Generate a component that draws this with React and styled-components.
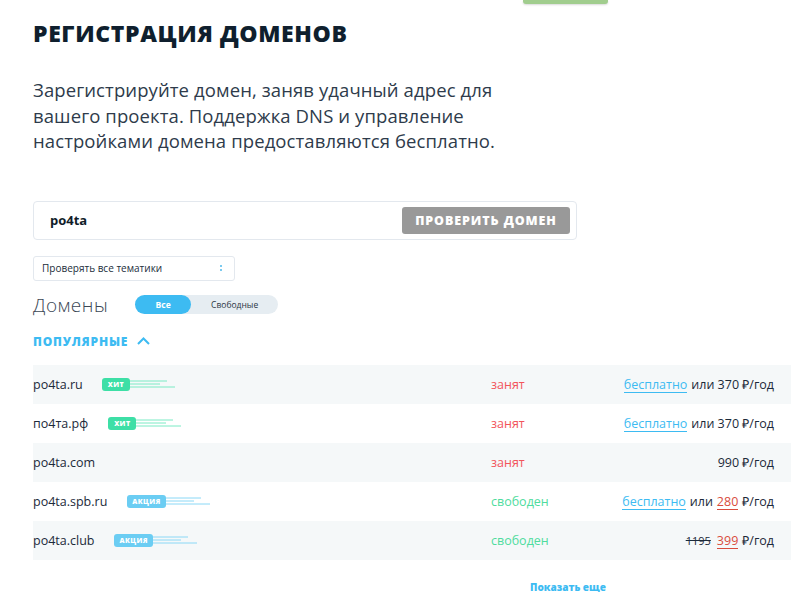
import React from 'react';
import styled, { createGlobalStyle } from 'styled-components';

const GlobalStyle = createGlobalStyle`
  body {
    margin: 0;
    background: #fff;
    font-family: "Open Sans", "Liberation Sans", sans-serif;
    color: #1c2a3a;
  }
`;

const Page = styled.div`
  width: 791px;
  height: 592px;
  overflow: hidden;
`;

const TopStrip = styled.div`
  height: 4px;
  padding-left: 523px;
  display: flex;
  align-items: flex-end;
`;

const TopButton = styled.div`
  width: 85px;
  height: 4px;
  background: #a1cd8e;
  border-radius: 0 0 3px 3px;
  box-shadow: 0 1px 2px rgba(0, 0, 0, 0.15);
`;

const Content = styled.div`
  padding: 0 0 0 33px;
`;

const Title = styled.h1`
  margin: 14px 0 0;
  font-size: 23px;
  line-height: 30px;
  font-weight: 800;
  letter-spacing: 0.6px;
  color: #0f1f2e;
`;

const Lead = styled.p`
  margin: 29px 0 0;
  width: 480px;
  font-size: 18.5px;
  line-height: 25.5px;
  font-weight: 400;
  letter-spacing: 0.1px;
  color: #2e3b4b;
`;

const SearchBox = styled.div`
  margin-top: 47px;
  height: 37px;
  width: 520px;
  border: 1px solid #e3e8ee;
  border-radius: 4px;
  display: flex;
  align-items: center;
  justify-content: space-between;
  padding: 0 6px 0 16px;
`;

const Query = styled.span`
  font-size: 13px;
  font-weight: 700;
  color: #101c28;
`;

const CheckButton = styled.button`
  height: 27px;
  width: 168px;
  border: 0;
  border-radius: 3px;
  background: #999999;
  color: #fff;
  font-family: "Open Sans", "Liberation Sans", sans-serif;
  font-size: 12.5px;
  font-weight: 800;
  letter-spacing: 0.9px;
  padding: 0;
`;

const Select = styled.div`
  margin-top: 16px;
  width: 180px;
  height: 23px;
  border: 1px solid #e3e8ee;
  border-radius: 3px;
  display: flex;
  align-items: center;
  justify-content: space-between;
  padding: 0 12px 0 8px;
  font-size: 10px;
  color: #222d3a;
`;

const Arrows = styled.span`
  display: flex;
  flex-direction: column;
  gap: 2px;
  & i {
    width: 2px;
    height: 2px;
    background: #4fb9ea;
    border-radius: 1px;
  }
`;

const FilterRow = styled.div`
  margin-top: 11px;
  display: flex;
  align-items: center;
  gap: 27px;
`;

const SectionTitle = styled.span`
  font-size: 19px;
  font-weight: 300;
  color: #3b4755;
  letter-spacing: 0.5px;
`;

const Toggle = styled.div`
  width: 143px;
  height: 19px;
  border-radius: 10px;
  background: #e6edf2;
  display: flex;
  align-items: center;
`;

const ToggleItem = styled.span`
  height: 19px;
  border-radius: 10px;
  display: flex;
  align-items: center;
  justify-content: center;
  font-size: 8.5px;
  font-weight: ${p => (p.$active ? 700 : 500)};
  color: ${p => (p.$active ? '#fff' : '#2b3644')};
  background: ${p => (p.$active ? '#3dbbf2' : 'transparent')};
  width: ${p => (p.$active ? '56px' : '87px')};
`;

const Group = styled.div`
  margin-top: 15px;
  display: flex;
  align-items: center;
  gap: 9px;
  font-size: 12px;
  font-weight: 800;
  color: #3dbbf2;
  letter-spacing: 0.8px;
`;

const Table = styled.div`
  margin-top: 15px;
`;

const Row = styled.div`
  height: 39px;
  display: grid;
  grid-template-columns: 458px 1fr auto;
  align-items: center;
  padding-right: 17px;
  background: ${p => (p.$shade ? '#f5f8f9' : '#fff')};
  font-size: 12.5px;
`;

const Domain = styled.div`
  display: flex;
  align-items: center;
  color: #1c2a3a;
`;

const Badge = styled.span`
  margin-left: ${p => p.$gap}px;
  display: flex;
  align-items: center;
`;

const Label = styled.span`
  height: 13px;
  padding: 0 ${p => (p.$kind === 'hit' ? 6 : 5)}px;
  border-radius: 3px;
  background: ${p => (p.$kind === 'hit' ? '#3ddfa6' : '#6bcdf3')};
  color: #fff;
  font-size: 7px;
  font-weight: 800;
  letter-spacing: 0.4px;
  display: flex;
  align-items: center;
`;

const Status = styled.span`
  color: ${p => (p.$free ? '#4fdc9e' : '#f2545b')};
`;

const Price = styled.span`
  display: flex;
  align-items: baseline;
  gap: 4px;
  color: #1c2a3a;
`;

const Free = styled.span`
  color: #3dbbf2;
  border-bottom: 1.5px solid #3dbbf2;
  line-height: 15px;
`;

const Sale = styled.span`
  color: #d94c3d;
  border-bottom: 1.5px solid #d94c3d;
  line-height: 15px;
`;

const Old = styled.s`
  font-size: 11px;
  margin-right: 2px;
`;

const More = styled.div`
  margin-top: 20px;
  padding-left: 497px;
  font-size: 10px;
  font-weight: 800;
  color: #3dbbf2;
`;

const Streak = ({ color, hit }) => (
  <svg width={hit ? 45 : 44} height="10" viewBox={hit ? '0 0 45 10' : '0 0 44 10'}>
    <line x1="0" y1="2" x2={hit ? 37 : 35} y2="2" stroke={color} strokeWidth="1" />
    <line x1="0" y1="5" x2={hit ? 30 : 28} y2="5" stroke={color} strokeWidth="1" />
    <line x1="0" y1="8" x2={hit ? 45 : 44} y2="8" stroke={color} strokeWidth="1" />
  </svg>
);

const Tag = ({ kind, gap }) => (
  <Badge $gap={gap}>
    <Label $kind={kind}>{kind === 'hit' ? 'ХИТ' : 'АКЦИЯ'}</Label>
    <Streak hit={kind === 'hit'} color={kind === 'hit' ? '#7aeac4' : '#8ad8f6'} />
  </Badge>
);

const Chevron = () => (
  <svg width="13" height="8" viewBox="0 0 13 8">
    <path d="M1 7 L6.5 1.5 L12 7" fill="none" stroke="#3dbbf2" strokeWidth="2" />
  </svg>
);

const domains = [
  { name: 'po4ta.ru', tag: 'hit', gap: 19, free: false, price: 'free370' },
  { name: 'по4та.рф', tag: 'hit', gap: 20, free: false, price: 'free370' },
  { name: 'po4ta.com', free: false, price: '990' },
  { name: 'po4ta.spb.ru', tag: 'sale', gap: 20, free: true, price: 'free280' },
  { name: 'po4ta.club', tag: 'sale', gap: 20, free: true, price: 'old' },
];

const renderPrice = kind => {
  if (kind === 'free370') return (<><Free>бесплатно</Free> или 370 ₽/год</>);
  if (kind === 'free280') return (<><Free>бесплатно</Free> или <Sale>280</Sale> ₽/год</>);
  if (kind === 'old') return (<><Old>1195</Old><Sale>399</Sale> ₽/год</>);
  return '990 ₽/год';
};

const App = () => (
  <Page>
    <GlobalStyle />
    <TopStrip>
      <TopButton />
    </TopStrip>
    <Content>
      <Title>РЕГИСТРАЦИЯ ДОМЕНОВ</Title>
      <Lead>
        Зарегистрируйте домен, заняв удачный адрес для вашего проекта. Поддержка DNS и управление
        настройками домена предоставляются бесплатно.
      </Lead>
      <SearchBox>
        <Query>po4ta</Query>
        <CheckButton>ПРОВЕРИТЬ ДОМЕН</CheckButton>
      </SearchBox>
      <Select>
        Проверять все тематики
        <Arrows><i /><i /></Arrows>
      </Select>
      <FilterRow>
        <SectionTitle>Домены</SectionTitle>
        <Toggle>
          <ToggleItem $active>Все</ToggleItem>
          <ToggleItem>Свободные</ToggleItem>
        </Toggle>
      </FilterRow>
      <Group>
        ПОПУЛЯРНЫЕ <Chevron />
      </Group>
      <Table>
        {domains.map((d, i) => (
          <Row key={d.name} $shade={i % 2 === 0}>
            <Domain>
              {d.name}
              {d.tag && <Tag kind={d.tag} gap={d.gap} />}
            </Domain>
            <Status $free={d.free}>{d.free ? 'свободен' : 'занят'}</Status>
            <Price>{renderPrice(d.price)}</Price>
          </Row>
        ))}
      </Table>
      <More>Показать еще</More>
    </Content>
  </Page>
);

export default App;
